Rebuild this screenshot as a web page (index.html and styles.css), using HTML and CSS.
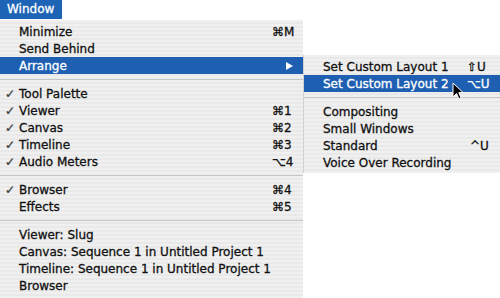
FILE: index.html
```html
<!DOCTYPE html>
<html lang="en">
<head>
    <meta charset="UTF-8">
    <meta name="viewport" content="width=device-width, initial-scale=1.0">
    <title>Window Menu</title>
    <link rel="stylesheet" href="styles.css">
</head>
<body>
    <div class="menubar">
        <span class="menu-title">Window</span>
    </div>

    <div class="menu main-menu">
        <div class="item"><span class="check"></span><span class="label">Minimize</span><span class="key">⌘M</span></div>
        <div class="item"><span class="check"></span><span class="label">Send Behind</span><span class="key"></span></div>
        <div class="item active has-sub">
            <span class="check"></span><span class="label">Arrange</span><span class="key"><span class="arrow"></span></span>

            <div class="menu submenu">
                <div class="item"><span class="check"></span><span class="label">Set Custom Layout 1</span><span class="key">⇧U</span></div>
                <div class="item active"><span class="check"></span><span class="label">Set Custom Layout 2</span><span class="key">⌥U</span></div>
                <div class="sep"></div>
                <div class="item"><span class="check"></span><span class="label">Compositing</span><span class="key"></span></div>
                <div class="item"><span class="check"></span><span class="label">Small Windows</span><span class="key"></span></div>
                <div class="item"><span class="check"></span><span class="label">Standard</span><span class="key ctrl">^U</span></div>
                <div class="item"><span class="check"></span><span class="label">Voice Over Recording</span><span class="key"></span></div>
            </div>
        </div>
        <div class="sep"></div>
        <div class="item"><span class="check">✓</span><span class="label">Tool Palette</span><span class="key"></span></div>
        <div class="item"><span class="check">✓</span><span class="label">Viewer</span><span class="key">⌘1</span></div>
        <div class="item"><span class="check">✓</span><span class="label">Canvas</span><span class="key">⌘2</span></div>
        <div class="item"><span class="check">✓</span><span class="label">Timeline</span><span class="key">⌘3</span></div>
        <div class="item"><span class="check">✓</span><span class="label">Audio Meters</span><span class="key">⌥4</span></div>
        <div class="sep"></div>
        <div class="item"><span class="check">✓</span><span class="label">Browser</span><span class="key">⌘4</span></div>
        <div class="item"><span class="check"></span><span class="label">Effects</span><span class="key">⌘5</span></div>
        <div class="sep"></div>
        <div class="item"><span class="check"></span><span class="label">Viewer: Slug</span><span class="key"></span></div>
        <div class="item"><span class="check"></span><span class="label">Canvas: Sequence 1 in Untitled Project 1</span><span class="key"></span></div>
        <div class="item"><span class="check"></span><span class="label">Timeline: Sequence 1 in Untitled Project 1</span><span class="key"></span></div>
        <div class="item"><span class="check"></span><span class="label">Browser</span><span class="key"></span></div>
    </div>

    <svg class="pointer" width="13" height="19" viewBox="0 0 13 19">
        <path d="M1 1 L1 15 L4.5 11.5 L7 17 L9 16 L6.8 10.5 L11 10.5 Z" fill="#000" stroke="#fff" stroke-width="1" stroke-linejoin="round"/>
    </svg>
</body>
</html>
```

FILE: styles.css
```css
body {
    margin: 0;
    background: #ffffff;
    font-family: 'DejaVu Sans', sans-serif;
    font-size: 12px;
    color: #111;
    -webkit-text-stroke: 0.3px;
    overflow: hidden;
}

.menubar {
    display: flex;
    height: 20px;
}

.menu-title {
    height: 19px;
    line-height: 19px;
    padding: 0 8px 0 7px;
    background: #1d63b6;
    color: #fff;
}

.menu {
    background: repeating-linear-gradient(to bottom, #f0f0f0 0, #f0f0f0 2px, #e9e9e9 2px, #e9e9e9 4px);
}

.main-menu {
    width: 303px;
    padding: 3px 0 4px;
}

.item {
    display: flex;
    align-items: center;
    height: 17px;
    padding-left: 5px;
    white-space: nowrap;
}

.item.active {
    background: #1e5fb2;
    color: #fff;
}

.check {
    width: 14px;
    color: #3c3c3c;
}

.label {
    flex: 1;
}

.key {
    width: 31px;
}

.has-sub {
    position: relative;
}

.has-sub > .key {
    display: flex;
    justify-content: flex-end;
    padding-right: 10px;
    width: 21px;
}

.arrow {
    width: 0;
    height: 0;
    border-top: 4px solid transparent;
    border-bottom: 4px solid transparent;
    border-left: 7px solid #fff;
}

.sep {
    height: 1px;
    margin: 5px 0;
    background: #c6c6c6;
}

.submenu {
    position: absolute;
    left: 100%;
    top: -2px;
    width: 197px;
    padding: 3px 0 2px;
    color: #111;
    border-left: 1px solid #d2d2d2;
    box-sizing: border-box;
}

.submenu .item {
    padding-left: 5px;
}

.submenu .key {
    width: 33px;
}

.submenu .ctrl {
    padding-left: 3px;
    width: 30px;
}

.pointer {
    position: absolute;
    left: 452px;
    top: 82px;
}
```
